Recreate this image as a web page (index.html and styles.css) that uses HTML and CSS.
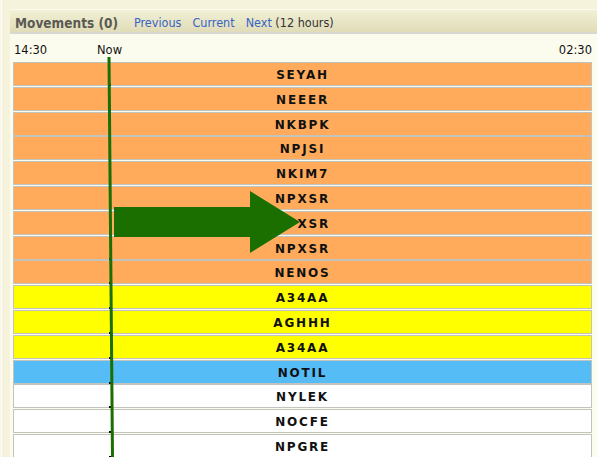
FILE: index.html
```html
<!DOCTYPE html>
<html>
<head>
<meta charset="utf-8">
<link rel="stylesheet" href="styles.css">
</head>
<body>
<div class="page">
  <div class="panel">
    <div class="header">
      <span class="title">Movements (0)</span>
      <a class="link">Previous</a>
      <a class="link">Current</a>
      <span class="next"><a class="link">Next</a> (12 hours)</span>
    </div>
    <div class="content">
      <div class="timeline">
        <span>14:30</span>
        <span class="now">Now</span>
        <span>02:30</span>
      </div>
      <div class="rows">
        <div class="row orange">SEYAH<i class="tick"></i></div>
        <div class="row orange">NEEER<i class="tick"></i></div>
        <div class="row orange">NKBPK<i class="tick"></i></div>
        <div class="row orange">NPJSI<i class="tick"></i></div>
        <div class="row orange">NKIM7<i class="tick"></i></div>
        <div class="row orange">NPXSR<i class="tick"></i></div>
        <div class="row orange">NPXSR<i class="tick"></i></div>
        <div class="row orange">NPXSR<i class="tick"></i></div>
        <div class="row orange">NENOS<i class="tick"></i></div>
        <div class="row yellow">A34AA<i class="tick"></i></div>
        <div class="row yellow">AGHHH<i class="tick"></i></div>
        <div class="row yellow">A34AA<i class="tick"></i></div>
        <div class="row blue">NOTIL<i class="tick"></i></div>
        <div class="row white">NYLEK<i class="tick"></i></div>
        <div class="row white">NOCFE<i class="tick"></i></div>
        <div class="row white">NPGRE<i class="tick"></i></div>
      </div>
    </div>
  </div>
  <svg class="overlay" width="597" height="457" viewBox="0 0 597 457">
    <line x1="109" y1="57" x2="112.5" y2="457" stroke="#1b6f00" stroke-width="3"/>
    <polygon points="114,207 250,207 250,191 300,222 250,253 250,237 114,237" fill="#1b6f00"/>
  </svg>
</div>
</body>
</html>
```
FILE: styles.css
```css
html, body {
  margin: 0;
  padding: 0;
}
body {
  background: #f6f4df;
  width: 597px;
  height: 457px;
  overflow: hidden;
  font-family: "DejaVu Sans", Verdana, sans-serif;
}
.page {
  position: relative;
  width: 597px;
  height: 457px;
  overflow: hidden;
  background: #f9f8ea;
}
.panel {
  margin-left: 3px;
  padding-left: 6px;
  padding-top: 9px;
  border-left: 1px solid #eeecd2;
  background: #f5f3dc;
  height: 448px;
}
.header {
  border-top: 1px solid #fbfaec;
  background: linear-gradient(#f2f0d6, #e0dcb8);
  border-bottom: 2px solid #d8d8d2;
  display: flex;
  align-items: center;
  font-family: "DejaVu Sans Condensed", "DejaVu Sans", sans-serif;
  font-size: 12.5px;
  padding-left: 5px;
  padding-top: 3px;
  box-sizing: border-box;
  height: 25px;
}
.title {
  font-weight: bold;
  color: #5a5a52;
  font-size: 13.5px;
  margin-right: 16px;
}
.link {
  color: #3763c4;
  margin-right: 11px;
}
.next {
  color: #333;
}
.next .link {
  margin-right: 0;
}
.content {
  background: #fcfcee;
  padding: 0 5px 0 3px;
  height: 430px;
}
.timeline {
  position: relative;
  height: 28px;
  display: flex;
  justify-content: space-between;
  align-items: flex-start;
  padding-top: 9px;
  box-sizing: border-box;
  font-size: 11.5px;
  color: #111;
  padding-left: 1px;
}
.timeline .now {
  position: absolute;
  left: 84px;
  top: 9px;
}
.rows {
  display: flex;
  flex-direction: column;
  gap: 0.8px;
}
.row {
  position: relative;
  height: 24px;
  box-sizing: border-box;
  border: 1px solid #c3c3bd;
  text-align: center;
  line-height: 24px;
  font-size: 12px;
  font-weight: bold;
  letter-spacing: 1.8px;
  color: #111;
  flex: none;
}
.orange { background: #ffab5b; }
.yellow { background: #ffff00; }
.blue { background: #55bcf5; }
.white { background: #ffffff; }
.tick {
  position: absolute;
  left: 95px;
  bottom: -1px;
  width: 2px;
  height: 2px;
  background: #000;
}
.overlay {
  position: absolute;
  left: 0;
  top: 0;
  pointer-events: none;
}
```
